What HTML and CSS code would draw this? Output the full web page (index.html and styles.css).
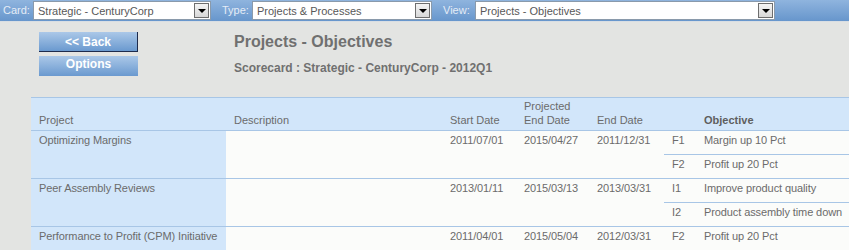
FILE: index.html
```html
<!DOCTYPE html>
<html lang="en">
<head>
    <meta charset="UTF-8">
    <title>Projects - Objectives</title>
    <link rel="stylesheet" href="styles.css">
</head>
<body>
    <!-- barre des filtres -->
    <div class="topbar">
        <span class="label">Card:</span>
        <div class="picker picker-card">
            <span class="picker-text">Strategic - CenturyCorp</span>
            <span class="picker-btn"><svg width="8" height="4" viewBox="0 0 8 4"><path d="M0 0h8L4 4z" fill="#000"/></svg></span>
        </div>
        <span class="label">Type:</span>
        <div class="picker picker-type">
            <span class="picker-text">Projects &amp; Processes</span>
            <span class="picker-btn"><svg width="8" height="4" viewBox="0 0 8 4"><path d="M0 0h8L4 4z" fill="#000"/></svg></span>
        </div>
        <span class="label">View:</span>
        <div class="picker picker-view">
            <span class="picker-text">Projects - Objectives</span>
            <span class="picker-btn"><svg width="8" height="4" viewBox="0 0 8 4"><path d="M0 0h8L4 4z" fill="#000"/></svg></span>
        </div>
    </div>

    <div class="main">
        <div class="actions">
            <button class="btn btn-back">&lt;&lt; Back</button>
            <button class="btn btn-options">Options</button>
        </div>
        <div class="heading">
            <h1>Projects - Objectives</h1>
            <h2>Scorecard : Strategic - CenturyCorp - 2012Q1</h2>
        </div>
    </div>

    <table class="grid">
        <colgroup>
            <col class="c-project">
            <col class="c-desc">
            <col class="c-start">
            <col class="c-proj">
            <col class="c-end">
            <col class="c-code">
            <col class="c-obj">
        </colgroup>
        <thead>
            <tr>
                <th class="project">Project</th>
                <th>Description</th>
                <th>Start Date</th>
                <th>Projected<br>End Date</th>
                <th>End Date</th>
                <th></th>
                <th class="obj-head">Objective</th>
            </tr>
        </thead>
        <tbody>
            <tr>
                <td class="project" rowspan="2">Optimizing Margins</td>
                <td rowspan="2"></td>
                <td rowspan="2">2011/07/01</td>
                <td rowspan="2">2015/04/27</td>
                <td rowspan="2">2011/12/31</td>
                <td>F1</td>
                <td>Margin up 10 Pct</td>
            </tr>
            <tr>
                <td>F2</td>
                <td>Profit up 20 Pct</td>
            </tr>
            <tr>
                <td class="project" rowspan="2">Peer Assembly Reviews</td>
                <td rowspan="2"></td>
                <td rowspan="2">2013/01/11</td>
                <td rowspan="2">2015/03/13</td>
                <td rowspan="2">2013/03/31</td>
                <td>I1</td>
                <td>Improve product quality</td>
            </tr>
            <tr>
                <td>I2</td>
                <td>Product assembly time down</td>
            </tr>
            <tr>
                <td class="project">Performance to Profit (CPM) Initiative</td>
                <td></td>
                <td>2011/04/01</td>
                <td>2015/05/04</td>
                <td>2012/03/31</td>
                <td>F2</td>
                <td>Profit up 20 Pct</td>
            </tr>
        </tbody>
    </table>
</body>
</html>
```

FILE: styles.css
```css
body {
    margin: 0;
    font-family: "Liberation Sans", Arial, sans-serif;
    font-size: 11px;
    background-color: #e3e4e2;
    color: #6b6b6b;
    overflow: hidden;
}

/* barre du haut */
.topbar {
    display: flex;
    align-items: flex-start;
    height: 22px;
    padding-top: 1px;
    box-sizing: border-box;
    background: linear-gradient(#8fb4de, #6796cc);
    border-bottom: 1px solid #d9dee3;
}

.label {
    color: #e4ecf6;
    font-size: 11px;
    line-height: 19px;
    margin-left: 3px;
    width: 30px;
}

.picker {
    display: flex;
    align-items: center;
    justify-content: space-between;
    height: 19px;
    box-sizing: border-box;
    background: #fff;
    border: 1px solid #8a9aab;
    padding: 0 1px 0 4px;
    margin-right: 8px;
}

.picker-card { width: 178px; }
.picker-type { width: 180px; }
.picker-view { width: 300px; margin-left: 2px; }

.picker-text {
    color: #585858;
    font-size: 11px;
}

.picker-btn {
    display: flex;
    align-items: center;
    justify-content: center;
    width: 15px;
    height: 15px;
    box-sizing: border-box;
    border: 1px solid #6e6e6e;
    background: linear-gradient(#f4f4f4, #d8d8d8);
}

/* zone titre + boutons */
.main {
    display: flex;
    height: 75px;
    padding-top: 10px;
    box-sizing: border-box;
}

.actions {
    display: flex;
    flex-direction: column;
    gap: 4px;
    margin-left: 39px;
    width: 99px;
}

.btn {
    font-family: "Liberation Sans", Arial, sans-serif;
    font-size: 12px;
    font-weight: bold;
    color: #fff;
    border: none;
    width: 99px;
    padding: 0;
    background: linear-gradient(#abc8e8, #6a99cf);
    cursor: pointer;
}

.btn-back {
    height: 20px;
    border-right: 1px solid #1e2b4c;
    border-bottom: 1px solid #1e2b4c;
}

.btn-options {
    height: 20px;
    line-height: 14px;
    padding-bottom: 4px;
}

.heading {
    margin-left: 96px;
}

.heading h1 {
    margin: 0;
    font-size: 16px;
    line-height: 20px;
    color: #707070;
}

.heading h2 {
    margin: 9px 0 0;
    font-size: 12px;
    line-height: 14px;
    color: #707070;
}

/* tableau */
.grid {
    margin-left: 31px;
    width: 818px;
    table-layout: fixed;
    border-collapse: collapse;
    background: #fbfcfa;
}

.c-project { width: 195px; }
.c-desc { width: 216px; }
.c-start { width: 74px; }
.c-proj { width: 73px; }
.c-end { width: 75px; }
.c-code { width: 32px; }

.grid th {
    background: #d2e6fa;
    font-weight: normal;
    text-align: left;
    vertical-align: bottom;
    line-height: 14px;
    padding: 0 8px 3px;
    height: 33px;
    box-sizing: border-box;
    border-top: 1px solid #a8c6e6;
    border-bottom: 1px solid #a8c6e6;
    color: #6b6b6b;
    white-space: nowrap;
}

.grid th.obj-head {
    font-weight: bold;
    color: #5e5e5e;
}

.grid td {
    vertical-align: top;
    line-height: 14px;
    padding: 2px 8px 0;
    height: 24px;
    box-sizing: border-box;
    border-bottom: 1px solid #a8c6e6;
    white-space: nowrap;
    letter-spacing: -0.1px;
}

.grid td.project {
    background: #d2e6fa;
}
```
